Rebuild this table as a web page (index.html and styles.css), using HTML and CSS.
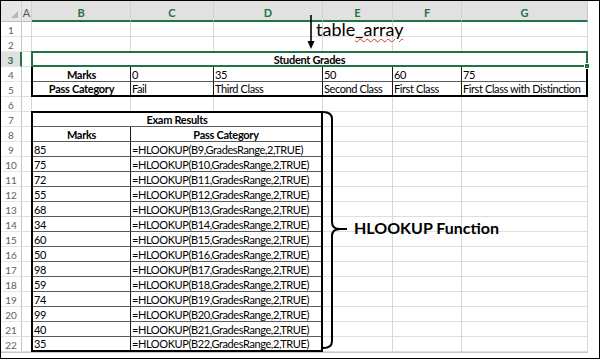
FILE: index.html
```html
<!DOCTYPE html>
<html>
<head>
<meta charset="utf-8">
<link rel="stylesheet" href="styles.css">
</head>
<body>
<div class="frame">
  <div class="sheet">
    <div class="hd corner"><svg width="20" height="20" viewBox="0 0 20 20"><polygon points="17,10 17,17 10,17" fill="#b9b9b9"/></svg></div>
    <div class="hd">A</div>
    <div class="hd on">B</div>
    <div class="hd on">C</div>
    <div class="hd on">D</div>
    <div class="hd on">E</div>
    <div class="hd on">F</div>
    <div class="hd on last">G</div>

    <div class="rows">
      <div class="rn">1</div><div class="rn">2</div><div class="rn on">3</div><div class="rn">4</div>
      <div class="rn">5</div><div class="rn">6</div><div class="rn">7</div><div class="rn">8</div>
      <div class="rn">9</div><div class="rn">10</div><div class="rn">11</div><div class="rn">12</div>
      <div class="rn">13</div><div class="rn">14</div><div class="rn">15</div><div class="rn">16</div>
      <div class="rn">17</div><div class="rn">18</div><div class="rn">19</div><div class="rn">20</div>
      <div class="rn">21</div><div class="rn">22</div>
    </div>

    <div class="gridlines"></div>

    <div class="selbox">Student Grades</div>

    <div class="grades">
      <div class="c b ctr">Marks</div><div class="c">0</div><div class="c">35</div><div class="c">50</div><div class="c">60</div><div class="c end">75</div>
      <div class="c b ctr">Pass Category</div><div class="c">Fail</div><div class="c">Third Class</div><div class="c">Second Class</div><div class="c">First Class</div><div class="c end">First Class with Distinction</div>
    </div>

    <div class="exam">
      <div class="c b ctr span">Exam Results</div>
      <div class="c b ctr">Marks</div><div class="c b ctr end">Pass Category</div>
      <div class="c">85</div><div class="c end">=HLOOKUP(B9,GradesRange,2,TRUE)</div>
      <div class="c">75</div><div class="c end">=HLOOKUP(B10,GradesRange,2,TRUE)</div>
      <div class="c">72</div><div class="c end">=HLOOKUP(B11,GradesRange,2,TRUE)</div>
      <div class="c">55</div><div class="c end">=HLOOKUP(B12,GradesRange,2,TRUE)</div>
      <div class="c">68</div><div class="c end">=HLOOKUP(B13,GradesRange,2,TRUE)</div>
      <div class="c">34</div><div class="c end">=HLOOKUP(B14,GradesRange,2,TRUE)</div>
      <div class="c">60</div><div class="c end">=HLOOKUP(B15,GradesRange,2,TRUE)</div>
      <div class="c">50</div><div class="c end">=HLOOKUP(B16,GradesRange,2,TRUE)</div>
      <div class="c">98</div><div class="c end">=HLOOKUP(B17,GradesRange,2,TRUE)</div>
      <div class="c">59</div><div class="c end">=HLOOKUP(B18,GradesRange,2,TRUE)</div>
      <div class="c">74</div><div class="c end">=HLOOKUP(B19,GradesRange,2,TRUE)</div>
      <div class="c">99</div><div class="c end">=HLOOKUP(B20,GradesRange,2,TRUE)</div>
      <div class="c">40</div><div class="c end">=HLOOKUP(B21,GradesRange,2,TRUE)</div>
      <div class="c last">35</div><div class="c end last">=HLOOKUP(B22,GradesRange,2,TRUE)</div>
    </div>
  </div>

  <svg class="marks" width="598" height="357" viewBox="0 0 598 357">
    <line x1="310" y1="14" x2="310" y2="42" stroke="#000" stroke-width="1.6"/>
    <polygon points="306.5,40 310,48 313.5,40" fill="#000"/>
    <path d="M322,111 Q331,111 331,118 L331,221 Q331,228 339,228 L346,228 M339,228 Q331,228 331,235 L331,340 Q331,347 322,347" fill="none" stroke="#000" stroke-width="2"/>
  </svg>
  <div class="note-array">table<span class="squiggle">_array</span></div>
  <div class="note-fn">HLOOKUP Function</div>
</div>
</body>
</html>
```
FILE: styles.css
```css
html, body {
  margin: 0;
  padding: 0;
  background: #fff;
}

.frame {
  width: 600px;
  height: 359px;
  box-sizing: border-box;
  border: 1px solid #000;
  position: relative;
  overflow: hidden;
  background: #fff;
  font-family: Lato, "Liberation Sans", sans-serif;
  color: #000;
}

.sheet {
  display: grid;
  grid-template-columns: 21px 10px 99px 83px 109px 70px 69px 126px;
  grid-template-rows: 21px repeat(22, 15px);
  border-bottom: 1px solid #c8c8c8;
  width: 587px;
}

/* column headers */
.hd {
  background: #e6e6e6;
  border-right: 1px solid #d0d0d0;
  border-bottom: 1px solid #bdbdbd;
  box-sizing: border-box;
  display: flex;
  align-items: flex-end;
  justify-content: center;
  padding-bottom: 3px;
  font-size: 11px;
  line-height: 11px;
  color: #555;
}
.hd.corner {
  padding: 0;
  align-items: stretch;
  justify-content: stretch;
}
.hd.on {
  color: #217346;
  font-weight: 700;
  border-bottom: 2px solid #217346;
  background: #e1e1e1;
  padding-bottom: 2px;
}
.hd.last {
  border-right: 1px solid #c6c6c6;
}

/* row headers */
.rows {
  grid-column: 1;
  grid-row: 2 / 24;
  display: flex;
  flex-direction: column;
}
.rn {
  height: 15px;
  box-sizing: border-box;
  border-bottom: 1px solid #e4e4e4;
  border-right: 1px solid #c6c6c6;
  display: flex;
  align-items: center;
  justify-content: center;
  font-size: 10px;
  line-height: 10px;
  color: #5e5e5e;
  padding-top: 1px;
}
.rn.on {
  background: #e1e1e1;
  color: #217346;
  font-weight: 700;
  border-right: 2px solid #217346;
}

/* cell gridlines */
.gridlines {
  grid-column: 2 / 9;
  grid-row: 2 / 24;
  background-image:
    linear-gradient(#d9d9d9, #d9d9d9),
    linear-gradient(#d9d9d9, #d9d9d9),
    linear-gradient(#d9d9d9, #d9d9d9),
    linear-gradient(#d9d9d9, #d9d9d9),
    linear-gradient(#d9d9d9, #d9d9d9),
    linear-gradient(#d9d9d9, #d9d9d9),
    linear-gradient(#d9d9d9, #d9d9d9),
    repeating-linear-gradient(to bottom, transparent 0 14px, #dedede 14px 15px);
  background-size: 1px 100%, 1px 100%, 1px 100%, 1px 100%, 1px 100%, 1px 100%, 1px 100%, 100% 100%;
  background-position: 9px 0, 108px 0, 191px 0, 300px 0, 370px 0, 439px 0, 565px 0, 0 0;
  background-repeat: no-repeat;
}

/* selected merged title row */
.selbox {
  grid-column: 3 / 9;
  grid-row: 4;
  margin: -1px 0 0 -1px;
  border: 2px solid #217346;
  background: #fff;
  position: relative;
  display: flex;
  align-items: center;
  justify-content: center;
  font-size: 11px;
  font-weight: 700;
  line-height: 11px;
  letter-spacing: -0.3px;
}
.selbox::after {
  content: "";
  position: absolute;
  right: -4px;
  bottom: -4px;
  width: 4px;
  height: 4px;
  background: #217346;
  border: 1px solid #fff;
}

/* cells */
.c {
  box-sizing: border-box;
  display: flex;
  align-items: center;
  padding: 0 0 0 1px;
  font-size: 11px;
  line-height: 11px;
  letter-spacing: -0.4px;
  white-space: nowrap;
  overflow: hidden;
  background: #fff;
  border-right: 1px solid #1a1a1a;
  border-bottom: 1px solid #5a5a5a;
}
.c.b { font-weight: 700; letter-spacing: -0.3px; }
.c.ctr { justify-content: center; padding: 0; }
.c.end { border-right: none; }
.c.last { border-bottom: none; }

.grades {
  grid-column: 3 / 9;
  grid-row: 5 / 7;
  margin-left: -1px;
  border: 2px solid #000;
  border-top: none;
  display: grid;
  grid-template-columns: 98px 83px 109px 70px 69px 124px;
  grid-template-rows: 15px 13px;
  background: #fff;
}
.grades .c:nth-child(n+7) { border-bottom: none; }

.exam {
  grid-column: 3 / 6;
  grid-row: 8 / 24;
  margin: -1px 0 0 -1px;
  border: 2px solid #000;
  display: grid;
  grid-template-columns: 98px 190px;
  grid-template-rows: 14px repeat(14, 15px) 13px;
  background: #fff;
}
.exam .span {
  grid-column: 1 / 3;
  border-right: none;
}

/* annotations laid over the sheet */
.marks {
  position: absolute;
  left: 0;
  top: 0;
}
.note-array {
  position: absolute;
  left: 315px;
  top: 19px;
  font-size: 18px;
  line-height: 18px;
  white-space: nowrap;
}
.squiggle {
  text-decoration: underline wavy #e03030;
  text-decoration-thickness: 1px;
  text-underline-offset: 2px;
}
.note-fn {
  position: absolute;
  left: 353px;
  top: 219px;
  font-size: 16px;
  line-height: 16px;
  font-weight: 700;
  white-space: nowrap;
}
```
